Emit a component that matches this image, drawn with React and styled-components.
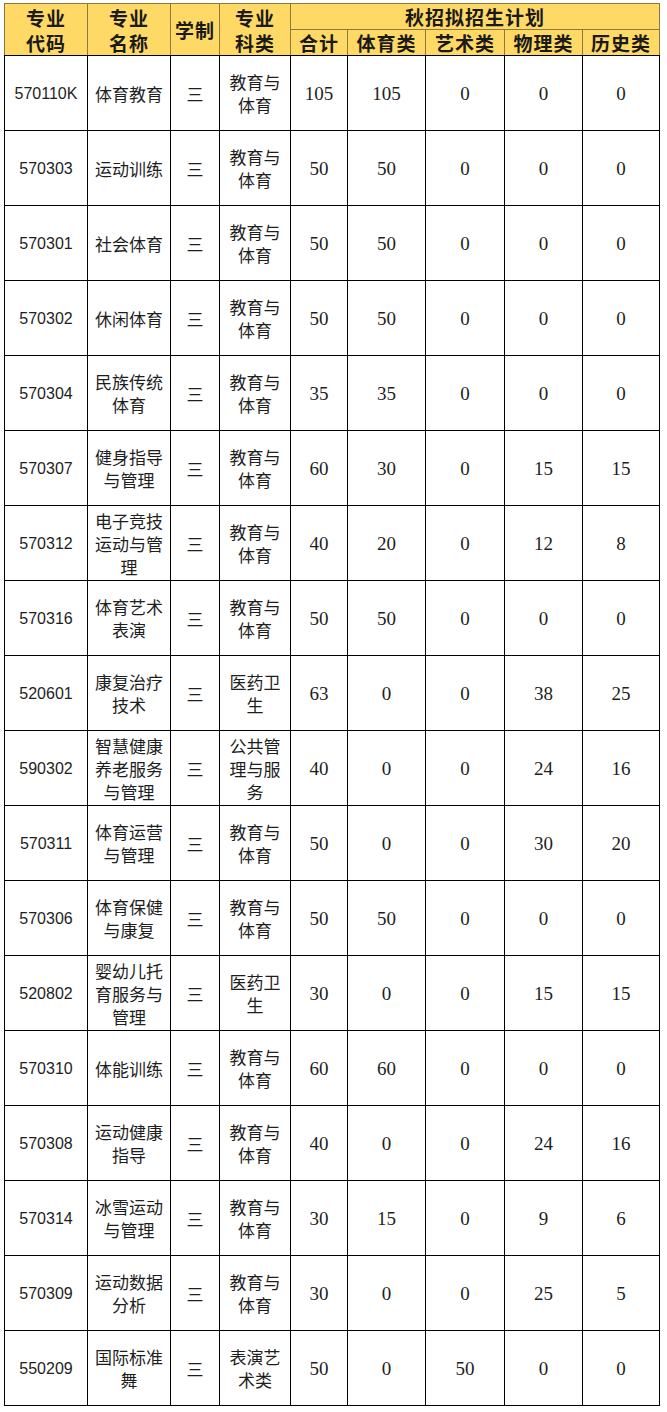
import React from "react";
import styled, { createGlobalStyle } from "styled-components";

const GlobalStyle = createGlobalStyle`
  html, body {
    margin: 0;
    padding: 0;
    background: #ffffff;
  }
  body {
    font-family: "Noto Sans CJK SC", "Noto Sans", sans-serif;
  }
`;

const rows = [
  ["570110K", "体育教育", "教育与体育", 105, 105, 0, 0, 0],
  ["570303", "运动训练", "教育与体育", 50, 50, 0, 0, 0],
  ["570301", "社会体育", "教育与体育", 50, 50, 0, 0, 0],
  ["570302", "休闲体育", "教育与体育", 50, 50, 0, 0, 0],
  ["570304", "民族传统体育", "教育与体育", 35, 35, 0, 0, 0],
  ["570307", "健身指导与管理", "教育与体育", 60, 30, 0, 15, 15],
  ["570312", "电子竞技运动与管理", "教育与体育", 40, 20, 0, 12, 8],
  ["570316", "体育艺术表演", "教育与体育", 50, 50, 0, 0, 0],
  ["520601", "康复治疗技术", "医药卫生", 63, 0, 0, 38, 25],
  ["590302", "智慧健康养老服务与管理", "公共管理与服务", 40, 0, 0, 24, 16],
  ["570311", "体育运营与管理", "教育与体育", 50, 0, 0, 30, 20],
  ["570306", "体育保健与康复", "教育与体育", 50, 50, 0, 0, 0],
  ["520802", "婴幼儿托育服务与管理", "医药卫生", 30, 0, 0, 15, 15],
  ["570310", "体能训练", "教育与体育", 60, 60, 0, 0, 0],
  ["570308", "运动健康指导", "教育与体育", 40, 0, 0, 24, 16],
  ["570314", "冰雪运动与管理", "教育与体育", 30, 15, 0, 9, 6],
  ["570309", "运动数据分析", "教育与体育", 30, 0, 0, 25, 5],
  ["550209", "国际标准舞", "表演艺术类", 50, 0, 50, 0, 0],
];

const widths = [83, 83, 49, 71, 57, 78, 79, 78, 77];

const Page = styled.div`
  padding: 3px 0 0 4px;
`;

const Table = styled.table`
  border-collapse: collapse;
  table-layout: fixed;
  width: 655px;
`;

const HeadRow = styled.tr`
  height: 26px;
`;

const HeadCell = styled.th`
  background: #ffd966;
  border: 1px solid #8c7a3c;
  border-bottom-color: ${(p) => (p.$last ? "#000" : "#8c7a3c")};
  padding: 0;
  font-family: "Noto Sans CJK SC", sans-serif;
  font-weight: 700;
  font-size: 19px;
  line-height: 25px;
  color: #1a1a1a;
  text-align: center;
  vertical-align: middle;
  letter-spacing: 1px;
`;

const BodyRow = styled.tr`
  height: 75px;
`;

const Cell = styled.td`
  border: 1px solid #000;
  padding: 0 ${(p) => p.$pad || 4}px;
  text-align: center;
  vertical-align: middle;
  color: #1e1e1e;
  font-family: ${(p) =>
    p.$kind === "num"
      ? `"Liberation Serif", "Times New Roman", serif`
      : p.$kind === "code"
      ? `"Liberation Sans", Arial, sans-serif`
      : `"Noto Sans CJK SC", sans-serif`};
  font-size: ${(p) =>
    p.$kind === "num" ? "19px" : p.$kind === "code" ? "16px" : "17px"};
  line-height: 23px;
  word-break: break-all;
`;

export default function App() {
  return (
    <Page>
      <GlobalStyle />
      <Table>
        <colgroup>
          {widths.map((w, i) => (
            <col key={i} style={{ width: w }} />
          ))}
        </colgroup>
        <thead>
          <HeadRow>
            <HeadCell rowSpan={2} $last>专业<br />代码</HeadCell>
            <HeadCell rowSpan={2} $last>专业<br />名称</HeadCell>
            <HeadCell rowSpan={2} $last>学制</HeadCell>
            <HeadCell rowSpan={2} $last>专业<br />科类</HeadCell>
            <HeadCell colSpan={5}>秋招拟招生计划</HeadCell>
          </HeadRow>
          <HeadRow>
            <HeadCell $last>合计</HeadCell>
            <HeadCell $last>体育类</HeadCell>
            <HeadCell $last>艺术类</HeadCell>
            <HeadCell $last>物理类</HeadCell>
            <HeadCell $last>历史类</HeadCell>
          </HeadRow>
        </thead>
        <tbody>
          {rows.map((r) => (
            <BodyRow key={r[0]}>
              <Cell $kind="code">{r[0]}</Cell>
              <Cell $pad={6}>{r[1]}</Cell>
              <Cell>三</Cell>
              <Cell $pad={8}>{r[2]}</Cell>
              {r.slice(3).map((n, i) => (
                <Cell key={i} $kind="num">{n}</Cell>
              ))}
            </BodyRow>
          ))}
        </tbody>
      </Table>
    </Page>
  );
}
